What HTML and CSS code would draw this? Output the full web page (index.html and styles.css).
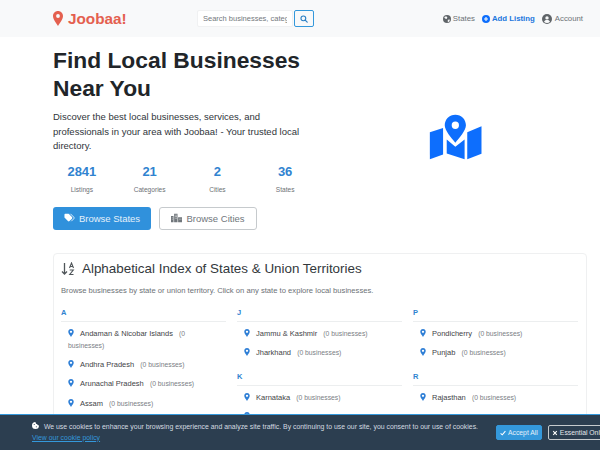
FILE: index.html
```html
<!DOCTYPE html>
<html lang="en">
<head>
  <meta charset="UTF-8" />
  <meta name="viewport" content="width=device-width, initial-scale=1.0"/>
  <title>Joobaa! - Local Business Directory</title>
  <link rel="stylesheet" href="styles.css">
</head>
<body>

<!-- Navbar -->
<nav class="navbar">
  <a class="brand" href="#">
    <svg class="brand-pin" viewBox="0 0 10 15"><path fill-rule="evenodd" d="M5 0C2.2 0 0 2.2 0 5c0 3 3 6.800 5 10 2-3.200 5-7 5-10 0-2.800-2.200-5-5-5zm0 3.100a1.900 1.900 0 1 1 0 3.800 1.900 1.900 0 0 1 0-3.800z"/></svg>
    Joobaa!
  </a>
  <form class="search">
    <input type="text" placeholder="Search businesses, categories" />
    <button type="button" class="search-btn">
      <svg viewBox="0 0 10 10"><circle cx="4.200" cy="4.200" r="3" fill="none" stroke="currentColor" stroke-width="1.400"/><path d="M6.500 6.500L9 9" stroke="currentColor" stroke-width="1.500" stroke-linecap="round"/></svg>
    </button>
  </form>
  <div class="nav-links">
    <a href="#">
      <svg class="nav-icon" viewBox="0 0 10 10"><circle cx="5" cy="5" r="5" fill="#5f6468"/><path d="M1.500 2.500L4 1.500 5.500 3 4.500 5 2.500 4.500zM6 6l2.500-.5L8 8 6 9z" fill="#f8f9fa"/></svg>
      States
    </a>
    <a class="nav-add" href="#">
      <svg class="nav-icon" viewBox="0 0 10 10"><circle cx="5" cy="5" r="5" fill="#0d6efd"/><path d="M5 2.500v5M2.500 5h5" stroke="#f8f9fa" stroke-width="1.400"/></svg>
      Add Listing
    </a>
    <a href="#">
      <svg class="nav-icon nav-icon-lg" viewBox="0 0 10 10"><circle cx="5" cy="5" r="5" fill="#5f6468"/><circle cx="5" cy="3.900" r="1.700" fill="#f8f9fa"/><path d="M2 7.800C2.600 6.400 3.700 6 5 6s2.400.4 3 1.800C7.200 8.600 6.200 9 5 9s-2.200-.4-3-1.200z" fill="#f8f9fa"/></svg>
      Account
    </a>
  </div>
</nav>

<!-- Hero -->
<section class="hero">
  <div class="hero-text">
    <h1>Find Local Businesses Near You</h1>
    <p class="lead">Discover the best local businesses, services, and professionals in your area with Joobaa! - Your trusted local directory.</p>
    <div class="stats">
      <div class="stat"><strong>2841</strong><span>Listings</span></div>
      <div class="stat"><strong>21</strong><span>Categories</span></div>
      <div class="stat"><strong>2</strong><span>Cities</span></div>
      <div class="stat"><strong>36</strong><span>States</span></div>
    </div>
    <div class="hero-btns">
      <a class="btn btn-primary" href="#">
        <svg class="btn-icon" viewBox="0 0 12 10"><path fill="#fff" d="M.5 1.200C.5.700.9.300 1.400.300h3c.4 0 .7.100 1 .4l3.300 3.300c.5.500.5 1.200 0 1.700L6 8.400c-.5.500-1.200.5-1.700 0L1 5.100c-.3-.3-.5-.7-.5-1z"/><path d="M7 .4l3.700 3.700c.5.500.5 1.200 0 1.700L8 8.500" fill="none" stroke="#fff" stroke-width=".9"/></svg>
        Browse States
      </a>
      <a class="btn btn-outline" href="#">
        <svg class="btn-icon" viewBox="0 0 13 10"><path fill="#70767b" d="M0 2.500h3V10H0zM3.700 0h4v10h-4zM8.400 4H13v6H8.400z"/><path fill="#fff" d="M4.600 1.200h.8V2h-.8zm1.400 0h.8V2H6zM4.600 3h.8v.8h-.8zM6 3h.8v.8H6zM4.600 4.800h.8v.8h-.8zM6 4.800h.8v.8H6zM1 4h.8v.8H1zm0 2h.8v.8H1zm9 0h.8v.8H10zm1.400 0h.8v.8h-.8z"/></svg>
        Browse Cities
      </a>
    </div>
  </div>
  <div class="hero-art">
    <svg class="map-icon" viewBox="385 340 165 145">
      <g fill="#0d6efd">
        <path d="M390 398l40-13v80l-40 15z"/>
        <path d="M441 420l26 22 28-22v60l-54-18z"/>
        <path d="M503 398l43-18v83l-43 17z"/>
        <path fill-rule="evenodd" d="M467 345c-18 0-32 14-32 32 0 16 20 38 32 53 12-15 32-37 32-53 0-18-14-32-32-32zm0 21a11 11 0 1 1 0 22 11 11 0 0 1 0-22z"/>
      </g>
    </svg>
  </div>
</section>

<!-- Index -->
<section class="index-card">
  <h2>
    <svg class="sort-icon" viewBox="0 0 14 14"><path d="M3.500 1v11M1 9.500L3.500 12 6 9.500" fill="none" stroke="#50565a" stroke-width="1.300"/><path d="M8.500 6l2-5 2 5M9.200 4.500h2.600M8.700 8h3.600l-3.600 4.500h3.800" fill="none" stroke="#50565a" stroke-width="1.100"/></svg>
    Alphabetical Index of States &amp; Union Territories
  </h2>
  <p class="index-intro">Browse businesses by state or union territory. Click on any state to explore local businesses.</p>
  <div class="index-grid">
    <div class="index-col">
      <h3>A</h3>
      <ul>
        <li><a href="#"><svg class="pin" viewBox="0 0 10 14"><use href="#pinShape"/></svg>Andaman &amp; Nicobar Islands</a> <small>(0 businesses)</small></li>
        <li><a href="#"><svg class="pin" viewBox="0 0 10 14"><use href="#pinShape"/></svg>Andhra Pradesh</a> <small>(0 businesses)</small></li>
        <li><a href="#"><svg class="pin" viewBox="0 0 10 14"><use href="#pinShape"/></svg>Arunachal Pradesh</a> <small>(0 businesses)</small></li>
        <li><a href="#"><svg class="pin" viewBox="0 0 10 14"><use href="#pinShape"/></svg>Assam</a> <small>(0 businesses)</small></li>
      </ul>
    </div>
    <div class="index-col">
      <h3>J</h3>
      <ul>
        <li><a href="#"><svg class="pin" viewBox="0 0 10 14"><use href="#pinShape"/></svg>Jammu &amp; Kashmir</a> <small>(0 businesses)</small></li>
        <li><a href="#"><svg class="pin" viewBox="0 0 10 14"><use href="#pinShape"/></svg>Jharkhand</a> <small>(0 businesses)</small></li>
      </ul>
      <h3>K</h3>
      <ul>
        <li><a href="#"><svg class="pin" viewBox="0 0 10 14"><use href="#pinShape"/></svg>Karnataka</a> <small>(0 businesses)</small></li>
        <li><a href="#"><svg class="pin" viewBox="0 0 10 14"><use href="#pinShape"/></svg>Kerala</a> <small>(0 businesses)</small></li>
      </ul>
    </div>
    <div class="index-col">
      <h3>P</h3>
      <ul>
        <li><a href="#"><svg class="pin" viewBox="0 0 10 14"><use href="#pinShape"/></svg>Pondicherry</a> <small>(0 businesses)</small></li>
        <li><a href="#"><svg class="pin" viewBox="0 0 10 14"><use href="#pinShape"/></svg>Punjab</a> <small>(0 businesses)</small></li>
      </ul>
      <h3>R</h3>
      <ul>
        <li><a href="#"><svg class="pin" viewBox="0 0 10 14"><use href="#pinShape"/></svg>Rajasthan</a> <small>(0 businesses)</small></li>
      </ul>
    </div>
  </div>
</section>

<!-- Cookies -->
<div class="cookie-bar">
  <div class="cookie-text">
    <svg class="cookie-icon" viewBox="0 0 10 10"><path fill="#fff" d="M5 0a5 5 0 1 0 5 5C8.500 5 7.500 4.200 7.300 3 6 3 5 1.500 5 0z"/><circle cx="3.200" cy="3.500" r=".8" fill="#2c3e50"/><circle cx="6.200" cy="6.800" r=".8" fill="#2c3e50"/></svg>
    We use cookies to enhance your browsing experience and analyze site traffic. By continuing to use our site, you consent to our use of cookies.
    <br><a href="#">View our cookie policy</a>
  </div>
  <div class="cookie-btns">
    <button class="cookie-accept">
      <svg viewBox="0 0 10 10"><path d="M1 5.500L3.800 8 9 2" fill="none" stroke="#fff" stroke-width="1.800"/></svg>
      Accept All
    </button>
    <button class="cookie-essential">
      <svg viewBox="0 0 10 10"><path d="M2 2l6 6M8 2L2 8" fill="none" stroke="#fff" stroke-width="1.800"/></svg>
      Essential Only
    </button>
  </div>
</div>

<!-- Pin partage -->
<svg class="hidden" aria-hidden="true">
  <symbol id="pinShape" viewBox="0 0 10 14">
    <path fill="#2f7fd6" fill-rule="evenodd" d="M5 0C2.200 0 0 2.200 0 5c0 3 3 6 5 9 2-3 5-6 5-9 0-2.800-2.200-5-5-5zm0 3a2 2 0 1 1 0 4 2 2 0 0 1 0-4z"/>
  </symbol>
</svg>

</body>
</html>
```

FILE: styles.css
```css
/* Base */
html, body {
  height: 450px;
  overflow: hidden;
}

body {
  margin: 0;
  background: #fff;
  color: #212529;
  font-family: 'Liberation Sans', Arial, sans-serif;
}

a {
  text-decoration: none;
  color: inherit;
}

.hidden {
  display: none;
}

/* Navbar */
.navbar {
  height: 37px;
  background: #f8f9fa;
  padding: 0 17px 0 53px;
  display: flex;
  align-items: center;
}

.brand {
  width: 144px;
  display: flex;
  align-items: center;
  gap: 5px;
  font-size: 15.300px;
  font-weight: bold;
  color: #e4604f;
}

.brand-pin {
  width: 10px;
  height: 15px;
  fill: #e4604f;
}

.search {
  display: flex;
  gap: 1px;
}

.search input {
  width: 96px;
  height: 17px;
  box-sizing: border-box;
  padding: 0 5px;
  border: 1px solid #f0f1f2;
  border-radius: 2px;
  background: #fff;
  font-family: inherit;
  font-size: 7.500px;
}

.search input::placeholder {
  color: #73787d;
}

.search-btn {
  width: 20px;
  height: 17px;
  padding: 0;
  border: 1px solid #3498db;
  border-radius: 2px;
  background: #f8f9fa;
  color: #2a7fc4;
  display: flex;
  align-items: center;
  justify-content: center;
}

.search-btn svg {
  width: 8px;
  height: 8px;
}

.nav-links {
  margin-left: auto;
  display: flex;
  align-items: center;
  gap: 7px;
  font-size: 7.800px;
  color: #6c7176;
}

.nav-links a {
  display: flex;
  align-items: center;
  gap: 2px;
}

.nav-add {
  color: #2277dd;
  font-weight: bold;
}

.nav-icon {
  width: 8px;
  height: 8px;
}

.nav-icon-lg {
  width: 10px;
  height: 10px;
  margin-right: 1px;
}

/* Hero */
.hero {
  display: flex;
  padding: 10px 13px 0 53px;
}

.hero-text {
  width: 259px;
}

h1 {
  margin: 0 0 8px;
  font-size: 22.800px;
  line-height: 27.500px;
  color: #212529;
}

.lead {
  margin: 0 0 8px;
  font-size: 9.500px;
  line-height: 14.500px;
  color: #30353a;
}

.stats {
  display: flex;
  margin: 0 -7px 0 -5px;
}

.stat {
  flex: 1;
  text-align: center;
}

.stat strong {
  display: block;
  font-size: 13px;
  line-height: 20px;
  color: #3083d0;
}

.stat span {
  display: block;
  margin-top: 4px;
  font-size: 6.600px;
  line-height: 8px;
  color: #6c7176;
}

.hero-btns {
  display: flex;
  gap: 8px;
  margin-top: 13px;
}

.btn {
  width: 98px;
  height: 23px;
  box-sizing: border-box;
  border-radius: 3px;
  display: flex;
  align-items: center;
  justify-content: center;
  gap: 4px;
  font-size: 9.500px;
}

.btn-primary {
  background: #3091dc;
  color: #e4f0fa;
}

.btn-outline {
  border: 1px solid #c6cacd;
  color: #70767b;
}

.btn-icon {
  width: 11px;
  height: 10px;
}

.hero-art {
  flex: 1;
  display: flex;
  justify-content: center;
  padding: 66px 0 0 11px;
}

.map-icon {
  width: 55px;
  height: 48px;
}

/* Index */
.index-card {
  margin: 23px 13px 0 53px;
  box-sizing: border-box;
  padding: 7px 7px 0;
  border: 1px solid #eff0f1;
  border-radius: 4px;
}

h2 {
  margin: 0;
  display: flex;
  align-items: center;
  gap: 7px;
  font-size: 13.400px;
  line-height: 16px;
  font-weight: normal;
  color: #33383c;
}

.sort-icon {
  width: 14px;
  height: 14px;
}

.index-intro {
  margin: 9px 0 0;
  font-size: 7.650px;
  line-height: 10px;
  color: #6c7176;
}

.index-grid {
  display: grid;
  grid-template-columns: repeat(3, 165px);
  gap: 11px;
  margin-top: 12px;
}

h3 {
  margin: 0 0 5px;
  padding-bottom: 4px;
  border-bottom: 1px solid #eceeef;
  font-size: 7.500px;
  line-height: 9px;
  color: #3083d0;
}

ul {
  list-style: none;
  margin: 0 0 7px;
  padding: 0 7px;
}

li {
  font-size: 7.500px;
  line-height: 12.300px;
  padding: 1px 0 6px;
  color: #3f4448;
}

li small {
  margin-left: 4px;
  font-size: 6.800px;
  color: #7b8085;
}

.pin {
  width: 6px;
  height: 8px;
  margin-right: 6px;
  vertical-align: -1px;
}

/* Cookies */
.cookie-bar {
  position: fixed;
  left: 0;
  right: 0;
  bottom: 0;
  height: 36px;
  box-sizing: border-box;
  border-top: 1px solid #3498db;
  background: #2c3e50;
  padding-left: 32px;
  display: flex;
  align-items: center;
  overflow: hidden;
}

.cookie-text {
  flex: 0 0 464px;
  font-size: 6.900px;
  line-height: 10.500px;
  color: #d5dbe0;
}

.cookie-text a {
  color: #3498db;
  text-decoration: underline;
}

.cookie-icon {
  width: 7px;
  height: 7px;
  margin-right: 3px;
}

.cookie-btns {
  flex: none;
  display: flex;
  gap: 6px;
}

.cookie-btns button {
  height: 15px;
  padding: 0 3px;
  border-radius: 2px;
  display: flex;
  align-items: center;
  gap: 2px;
  font-family: inherit;
  font-size: 6.800px;
  white-space: nowrap;
}

.cookie-btns svg {
  width: 6px;
  height: 6px;
}

.cookie-accept {
  border: 1px solid #3498db;
  background: #3498db;
  color: #e4f0fa;
}

.cookie-essential {
  border: 1px solid #c6cacd;
  background: transparent;
  color: #e4e8ec;
}
```
